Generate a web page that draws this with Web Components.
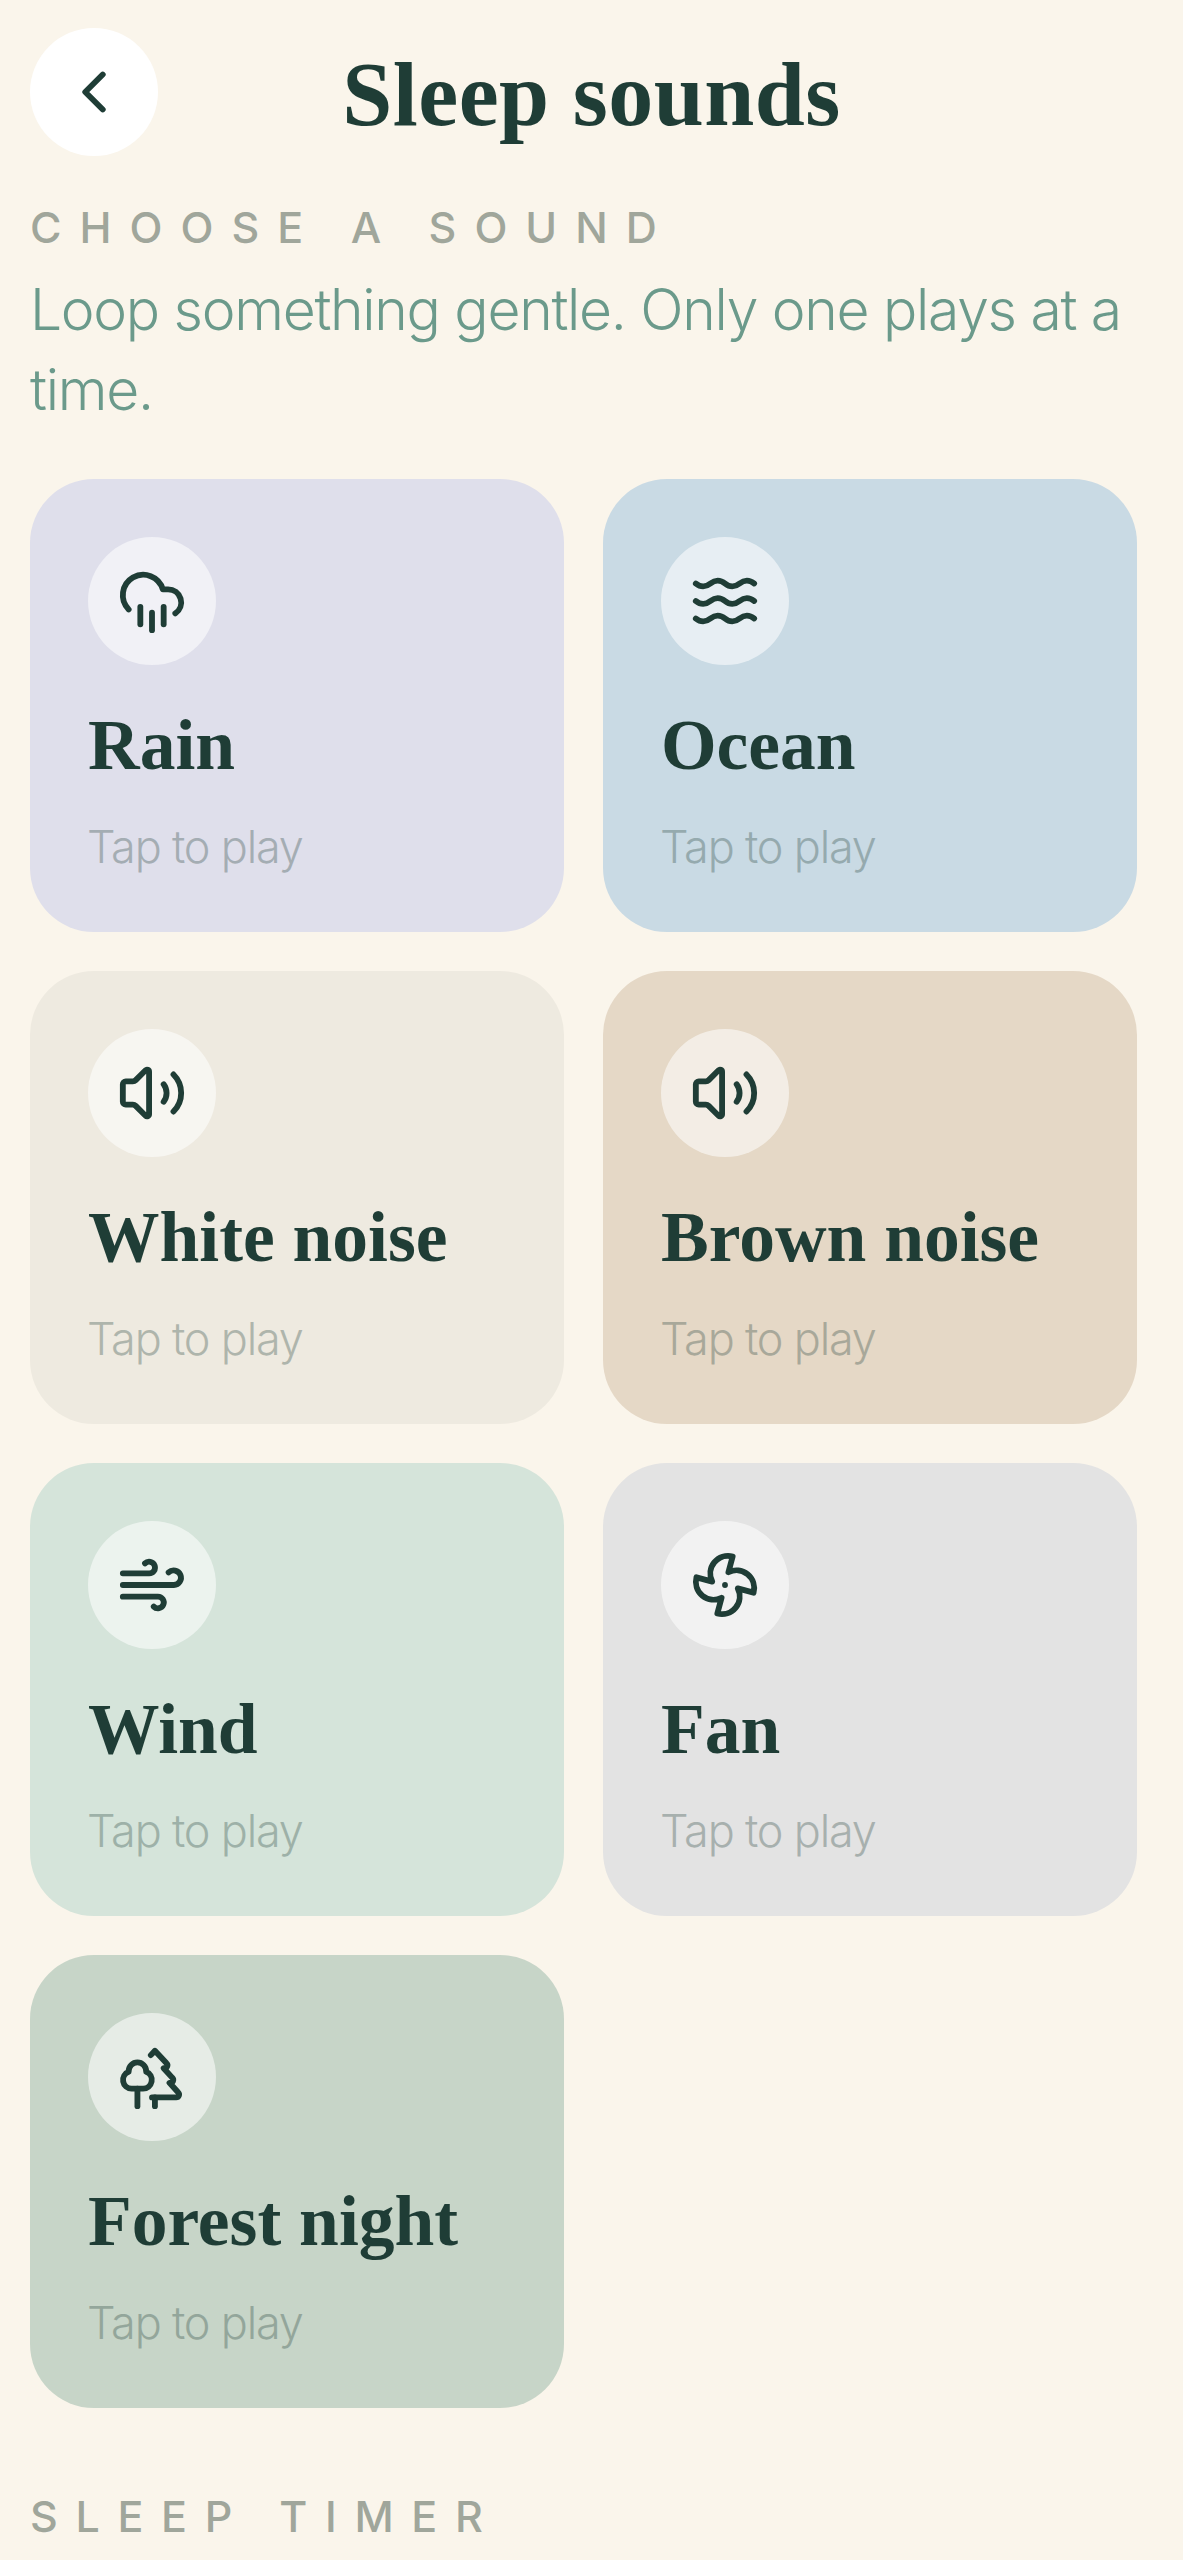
<!doctype html>
<html>
<head>
<meta charset="utf-8">
<title>Sleep sounds</title>
<style>
  html, body { margin:0; padding:0; background:#faf5eb; }
</style>
</head>
<body>
<sleep-app>
  <app-header>Sleep sounds</app-header>
  <section-label>CHOOSE A SOUND</section-label>
  <p style="margin:0;font:350 57px/80px Inter,'Noto Sans',sans-serif;letter-spacing:-1.3px;color:#6b9a8b;padding:15px 0 49px">Loop something gentle. Only one plays at a time.</p>
  <sound-grid>
    <sound-card name="Rain" icon="rain" color="#dfdfeb"></sound-card>
    <sound-card name="Ocean" icon="ocean" color="#c9dae4"></sound-card>
    <sound-card name="White noise" icon="speaker" color="#eeeae0"></sound-card>
    <sound-card name="Brown noise" icon="speaker" color="#e5d8c6"></sound-card>
    <sound-card name="Wind" icon="wind" color="#d5e4da"></sound-card>
    <sound-card name="Fan" icon="fan" color="#e3e3e3"></sound-card>
    <sound-card name="Forest night" icon="forest" color="#c7d5c8"></sound-card>
  </sound-grid>
  <section-label style="margin-top:80px;letter-spacing:17.7px">SLEEP TIMER</section-label>
</sleep-app>
<script>
(()=>{
  const ICONS = {
    back: '<path d="m15 18-6-6 6-6"/>',
    rain: '<path d="M4 14.899A7 7 0 1 1 15.71 8h1.79a4.5 4.5 0 0 1 2.5 8.242"/><path d="M16 14v6"/><path d="M8 14v6"/><path d="M12 16v6"/>',
    ocean: '<path d="M2 6c.6.5 1.2 1 2.5 1C7 7 7 5 9.5 5c2.6 0 2.4 2 5 2 2.5 0 2.5-2 5-2 1.3 0 1.9.5 2.5 1"/><path d="M2 12c.6.5 1.2 1 2.5 1 2.5 0 2.5-2 5-2 2.6 0 2.4 2 5 2 2.5 0 2.5-2 5-2 1.3 0 1.9.5 2.5 1"/><path d="M2 18c.6.5 1.2 1 2.5 1 2.5 0 2.5-2 5-2 2.6 0 2.4 2 5 2 2.5 0 2.5-2 5-2 1.3 0 1.9.5 2.5 1"/>',
    speaker: '<path d="M11 4.702a.705.705 0 0 0-1.203-.498L6.413 7.587A1.4 1.4 0 0 1 5.416 8H3a1 1 0 0 0-1 1v6a1 1 0 0 0 1 1h2.416a1.4 1.4 0 0 1 .997.413l3.383 3.384A.705.705 0 0 0 11 19.298z"/><path d="M16 9a5 5 0 0 1 0 6"/><path d="M19.364 18.364a9 9 0 0 0 0-12.728"/>',
    wind: '<path d="M17.7 7.7a2.5 2.5 0 1 1 1.8 4.3H2"/><path d="M9.6 4.6A2 2 0 1 1 11 8H2"/><path d="M12.6 19.4A2 2 0 1 0 14 16H2"/>',
    fan: '<path d="M10.827 16.379a6.082 6.082 0 0 1-8.618-7.002l5.412 1.45a6.082 6.082 0 0 1 7.002-8.618l-1.45 5.412a6.082 6.082 0 0 1 8.618 7.002l-5.412-1.45a6.082 6.082 0 0 1-7.002 8.618l1.45-5.412Z"/><path d="M12 12v.01"/>',
    forest: '<path d="M10 10v.2A3 3 0 0 1 8.9 16H5a3 3 0 0 1-1-5.8V10a3 3 0 0 1 6 0Z"/><path d="M7 16v6"/><path d="M13 19v3"/><path d="M12 19h8.3a1 1 0 0 0 .7-1.7L18 14h.3a1 1 0 0 0 .7-1.7L16 9h.2a1 1 0 0 0 .8-1.7L13 3l-1.4 1.5"/>'
  };
  function svg (name) {
    return `<svg viewBox="0 0 24 24" width="70" height="70" fill="none" stroke="#1f3d36" stroke-width="2" stroke-linecap="round" stroke-linejoin="round">${ICONS[name]}</svg>`;
  }

  customElements.define("sleep-app", class extends HTMLElement {
    constructor () {
      super();
      this.attachShadow({mode:"open"}).innerHTML = `
      <style>:host { display:block; box-sizing:border-box; height:2560px; overflow:hidden; padding:28px 46px 0 30px; }</style>
      <slot></slot>`;
    }
  });

  customElements.define("app-header", class extends HTMLElement {
    constructor () {
      super();
      this.attachShadow({mode:"open"}).innerHTML = `
      <style>
        :host { display:grid; grid-template-columns:128px 1fr 128px; align-items:start; margin:0 -16px 37px 0; }
        .back { width:128px; height:128px; border-radius:50%; background:#fff; display:flex; align-items:center; justify-content:center; }
        svg { display:block; }
        h1 { margin:0; text-align:center; font:700 90px/134px "Liberation Serif",serif; letter-spacing:.5px; color:#1f3d36; }
      </style>
      <div class="back">${svg("back")}</div>
      <h1><slot></slot></h1>
      <div></div>`;
    }
  });

  customElements.define("section-label", class extends HTMLElement {
    constructor () {
      super();
      this.attachShadow({mode:"open"}).innerHTML = `
      <style>:host { display:block; font:500 43px/56px Inter,"Noto Sans",sans-serif; letter-spacing:18px; color:#a0a69b; white-space:nowrap; }</style>
      <slot></slot>`;
    }
  });

  customElements.define("sound-grid", class extends HTMLElement {
    constructor () {
      super();
      this.attachShadow({mode:"open"}).innerHTML = `
      <style>:host { display:grid; grid-template-columns:534px 534px; gap:39px; }</style>
      <slot></slot>`;
    }
  });

  customElements.define("sound-card", class extends HTMLElement {
    constructor () {
      super();
      this.attachShadow({mode:"open"}).innerHTML = `
      <style>
        :host { display:block; box-sizing:border-box; height:453px; padding:58px; border-radius:64px; }
        .ic { width:128px; height:128px; border-radius:50%; background:rgba(255,255,255,.55); display:flex; align-items:center; justify-content:center; }
        svg { display:block; }
        h2 { margin:38px 0 0; font:700 71.5px/84px "Liberation Serif",serif; color:#1f3d36; white-space:nowrap; }
        p { margin:32px 0 0 -1px; font:350 45px/56px Inter,"Noto Sans",sans-serif; letter-spacing:-1.2px; color:#1f3d36; opacity:.3; }
      </style>
      <div class="ic">${svg(this.getAttribute("icon"))}</div>
      <h2>${this.getAttribute("name")}</h2>
      <p>Tap to play</p>`;
      this.style.background = this.getAttribute("color");
    }
  });
})();
</script>
</body>
</html>
